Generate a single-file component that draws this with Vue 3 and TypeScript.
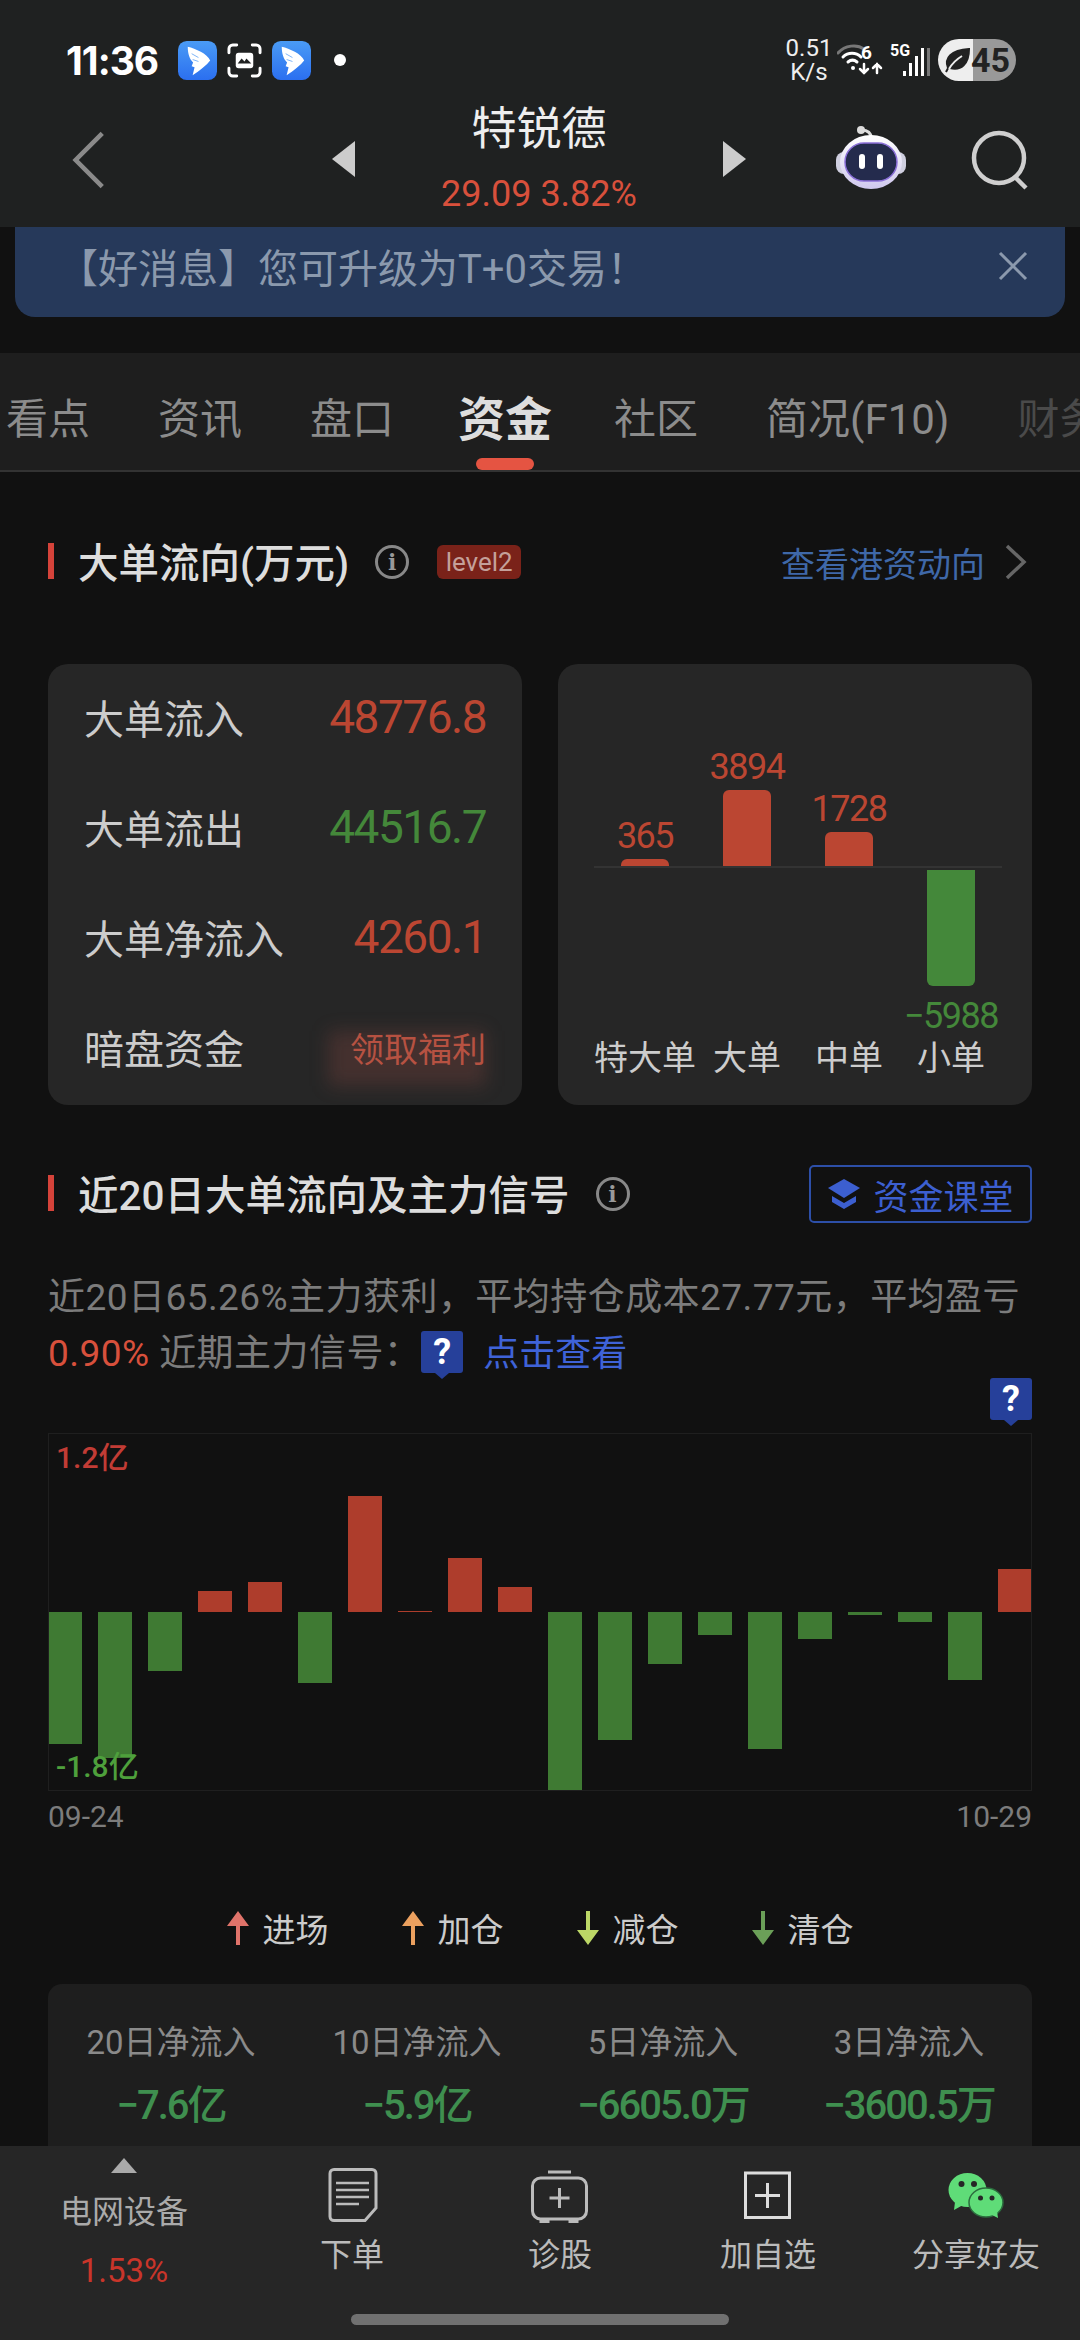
<script setup lang="ts">
interface Row { label: string; value: string; tone: string }
interface Col { value: string; label: string; height: number }

const tabs = ['看点', '资讯', '盘口', '资金', '社区', '简况(F10)', '财务']
const flowRows: Row[] = [
  { label: '大单流入', value: '48776.8', tone: 'red' },
  { label: '大单流出', value: '44516.7', tone: 'green' },
  { label: '大单净流入', value: '4260.1', tone: 'red' },
]
const orderCols: Col[] = [
  { value: '365', label: '特大单', height: 7 },
  { value: '3894', label: '大单', height: 76 },
  { value: '1728', label: '中单', height: 34 },
  { value: '−5988', label: '小单', height: -116 },
]
// 20-day net flow, in chart pixels: positive is inflow.
const dayFlow = [-132, -146, -59, 21, 30, -71, 116, 1, 54, 25, -179, -128, -52, -23, -137, -27, -3, -10, -68, 43]
const legend = [
  { label: '进场', color: '#e0736a', up: true },
  { label: '加仓', color: '#eba05f', up: true },
  { label: '减仓', color: '#bcd766', up: false },
  { label: '清仓', color: '#6b9f58', up: false },
]
const netFlows = [
  { label: '20日净流入', value: '−7.6亿' },
  { label: '10日净流入', value: '−5.9亿' },
  { label: '5日净流入', value: '−6605.0万' },
  { label: '3日净流入', value: '−3600.5万' },
]
</script>

<template>
  <div class="page">
    <header class="top">
      <div class="status">
        <div class="status-left">
          <span class="clock">11:36</span>
          <svg class="app-icon" viewBox="0 0 40 40">
            <defs>
              <linearGradient id="ding" x1="0" y1="0" x2="0" y2="1">
                <stop offset="0" stop-color="#4a9bf5" />
                <stop offset="1" stop-color="#2b6ff0" />
              </linearGradient>
            </defs>
            <rect width="40" height="40" rx="9" fill="url(#ding)" />
            <path d="M10 6C18 8 30 13 33 20 30 24 22 31 15 35L17 27 14 26 15.500 22C12 19 10 13 10 6Z" fill="#fff" />
            <path d="M14 13l7 4M15 19l6 2" stroke="#7db4f7" stroke-width="1" fill="none" />
          </svg>
          <svg class="shot-icon" viewBox="0 0 36 36" fill="none" stroke="#fff" stroke-width="3" stroke-linecap="round">
            <path d="M2 10V6a4 4 0 0 1 4-4h4M26 2h4a4 4 0 0 1 4 4v4M34 26v4a4 4 0 0 1-4 4h-4M10 34H6a4 4 0 0 1-4-4v-4" />
            <rect x="9" y="10" width="18" height="16" rx="3" fill="#fff" stroke="none" />
            <path d="M11 21l4-5 3 3 2-3 5 5z" fill="#1f2121" stroke="none" />
          </svg>
          <svg class="app-icon" viewBox="0 0 40 40">
            <rect width="40" height="40" rx="9" fill="url(#ding)" />
            <path d="M10 6C18 8 30 13 33 20 30 24 22 31 15 35L17 27 14 26 15.500 22C12 19 10 13 10 6Z" fill="#fff" />
            <path d="M14 13l7 4M15 19l6 2" stroke="#7db4f7" stroke-width="1" fill="none" />
          </svg>
          <i class="note-dot"></i>
        </div>
        <div class="status-right">
          <div class="speed"><span>0.51</span><span>K/s</span></div>
          <svg class="wifi" viewBox="0 0 46 36" fill="none" stroke-linecap="round">
            <path d="M1 11C8 3 20 2 27 7" stroke="#777" stroke-width="3" />
            <path d="M6 15c5-5 13-5 18 0" stroke="#fff" stroke-width="3" />
            <path d="M11 20c3-2.500 6-2.500 9 0" stroke="#fff" stroke-width="3" />
            <circle cx="16" cy="26" r="2" fill="#fff" />
            <path d="M27 22v9M23 27l4 4 4-4M40 31v-9M36 26l4-4 4 4" stroke="#fff" stroke-width="2.500" />
          </svg>
          <span class="wifi-six">6</span>
          <div class="cell">
            <span class="cell-type">5G</span>
            <div class="bars"><i></i><i></i><i></i><i></i><i></i></div>
          </div>
          <div class="battery">
            <svg class="leaf" viewBox="0 0 28 28"><path d="M3 26C6 20 8 17 12 14M5 22C1 12 8 4 26 3 26 18 18 25 7 22Z" fill="#222" stroke="#222" stroke-width="2" /><path d="M6 23C10 16 14 13 19 10" stroke="#eee" stroke-width="2" fill="none" /></svg>
            <span>45</span>
          </div>
        </div>
      </div>
      <div class="nav">
        <svg class="back" viewBox="0 0 36 62" fill="none" stroke="#8a8a8a" stroke-width="5"><path d="M33 2 4 31l29 29" /></svg>
        <div class="stock">
          <i class="tri tri-left"></i>
          <div class="stock-name">
            <strong>特锐德</strong>
            <span>29.09 3.82%</span>
          </div>
          <i class="tri tri-right"></i>
        </div>
        <svg class="robot" viewBox="0 0 70 64">
          <defs>
            <linearGradient id="face" x1="0" y1="0" x2="0" y2="1">
              <stop offset="0" stop-color="#ffffff" />
              <stop offset="1" stop-color="#cfc8ee" />
            </linearGradient>
          </defs>
          <path d="M26 4c5 0 9 3 10 9" fill="none" stroke="#dcdcdc" stroke-width="3" />
          <circle cx="25" cy="4" r="4" fill="#dcdcdc" />
          <rect x="0" y="26" width="70" height="22" rx="8" fill="#cfcfe0" />
          <ellipse cx="35" cy="36" rx="31" ry="27" fill="url(#face)" />
          <rect x="9" y="17" width="52" height="38" rx="19" fill="#242b4d" stroke="#8a6fd8" stroke-width="1.500" />
          <rect x="23" y="28" width="6" height="15" rx="3" fill="#fff" />
          <rect x="41" y="28" width="6" height="15" rx="3" fill="#fff" />
        </svg>
        <svg class="search" viewBox="0 0 60 60" fill="none" stroke="#cfcfcf" stroke-width="4.500"><circle cx="28" cy="28" r="25" /><path d="M44 47l11 11" /></svg>
      </div>
    </header>

    <div class="notice">
      <span class="notice-text">【好消息】您可升级为T+0交易！</span>
      <svg class="close" viewBox="0 0 30 30" fill="none" stroke="#8b99ad" stroke-width="3"><path d="M2 2l26 26M28 2 2 28" /></svg>
    </div>

    <nav class="tabs">
      <span v-for="t in tabs" :key="t" class="tab" :class="{ active: t === '资金', faded: t === '财务' }">{{ t }}</span>
    </nav>

    <main>
      <section class="head head-flow">
        <h2 class="title">大单流向(万元)</h2>
        <span class="info">i</span>
        <span class="level">level2</span>
        <a class="link">查看港资动向</a>
        <svg class="link-chevron" viewBox="0 0 22 36" fill="none" stroke="#666" stroke-width="3.500"><path d="M2 2l17 16L2 34" /></svg>
      </section>

      <section class="cards">
        <div class="card flow-card">
          <div v-for="r in flowRows" :key="r.label" class="flow-row">
            <span>{{ r.label }}</span>
            <b :class="r.tone">{{ r.value }}</b>
          </div>
          <div class="flow-row">
            <span>暗盘资金</span>
            <em class="perk">领取福利</em>
          </div>
        </div>
        <div class="card order-card">
          <div v-for="c in orderCols" :key="c.label" class="order-col">
            <div class="order-up">
              <template v-if="c.height > 0">
                <span class="order-value red">{{ c.value }}</span>
                <i class="order-bar bar-red" :style="{ height: c.height + 'px' }"></i>
              </template>
            </div>
            <div class="order-down">
              <template v-if="c.height < 0">
                <i class="order-bar bar-green" :style="{ height: -c.height + 'px' }"></i>
                <span class="order-value green">{{ c.value }}</span>
              </template>
            </div>
            <span class="order-label">{{ c.label }}</span>
          </div>
        </div>
      </section>

      <section class="head head-signal">
        <h2 class="title">近20日大单流向及主力信号</h2>
        <span class="info">i</span>
        <button class="lesson">
          <svg viewBox="0 0 34 32" fill="#3c5fd0"><path d="M17 1l16 9-16 10L1 10z" /><path d="M5 18l12 7 12-7v6l-12 7-12-7z" /></svg>
          资金课堂
        </button>
      </section>

      <p class="summary">
        近20日65.26%主力获利，平均持仓成本27.77元，平均盈亏<br />
        <span class="loss">0.90%</span> 近期主力信号：<i class="q q-inline">?</i><a class="check">点击查看</a>
      </p>
      <div class="q-row"><i class="q">?</i></div>

      <div class="day-chart">
        <div v-for="(v, i) in dayFlow" :key="i" class="day-col">
          <div class="day-up"><i v-if="v > 0" class="bar-red" :style="{ height: v + 'px' }"></i></div>
          <div class="day-down"><i v-if="v < 0" class="bar-green" :style="{ height: -v + 'px' }"></i></div>
        </div>
        <span class="scale scale-top">1.2亿</span>
        <span class="scale scale-bottom">-1.8亿</span>
      </div>
      <div class="dates"><span>09-24</span><span>10-29</span></div>

      <div class="legend">
        <div v-for="l in legend" :key="l.label" class="legend-item">
          <svg viewBox="0 0 22 34" :class="{ down: !l.up }">
            <path d="M11 0 22 15H13V34H9V15H0z" :fill="l.color" />
          </svg>
          <span>{{ l.label }}</span>
        </div>
      </div>

      <div class="net-card">
        <div v-for="n in netFlows" :key="n.label" class="net-item">
          <span>{{ n.label }}</span>
          <b>{{ n.value }}</b>
        </div>
      </div>
    </main>

    <footer class="dock">
      <div class="dock-row">
        <div class="sector">
          <i class="sector-tri"></i>
          <span>电网设备</span>
          <b>1.53%</b>
        </div>
        <div class="dock-item">
          <svg viewBox="0 0 60 60" fill="none" stroke="#bbb" stroke-width="3">
            <path d="M12 3.500H50a4 4 0 0 1 4 4V42L43 54.500H12a4 4 0 0 1-4-4V7.500a4 4 0 0 1 4-4z" />
            <path d="M14 17H47M14 24H47M14 31H47M14 38H37" stroke-width="2.600" />
          </svg>
          <span>下单</span>
        </div>
        <div class="dock-item">
          <svg viewBox="0 0 60 60" fill="none" stroke="#bbb" stroke-width="3">
            <path d="M18 6H41" />
            <rect x="2.500" y="12" width="54" height="41" rx="8" />
            <path d="M29.500 22V42M19.500 32H39.500" />
            <path d="M9.500 53h10v4h-10zM38.500 53h10v4h-10z" fill="#bbb" stroke="none" />
          </svg>
          <span>诊股</span>
        </div>
        <div class="dock-item">
          <svg viewBox="0 0 60 60" fill="none" stroke="#ddd" stroke-width="3">
            <rect x="7.500" y="7" width="44" height="44.500" />
            <path d="M29.500 17V42M17 29.500H42" />
          </svg>
          <span>加自选</span>
        </div>
        <div class="dock-item">
          <svg viewBox="0 0 60 60" fill="#5fdc78">
            <ellipse cx="21.500" cy="24" rx="19" ry="17" />
            <path d="M9 36 8 44 17 39z" />
            <ellipse cx="40" cy="36.500" rx="17" ry="14.500" stroke="#2b6b3d" stroke-width="1.500" />
            <path d="M46 49 52 52 51 45z" />
            <circle cx="15.500" cy="18" r="3" fill="#262626" />
            <circle cx="28" cy="18" r="3" fill="#262626" />
            <circle cx="34.500" cy="32" r="2.500" fill="#262626" />
            <circle cx="46" cy="32" r="2.500" fill="#262626" />
          </svg>
          <span>分享好友</span>
        </div>
      </div>
      <div class="home-pill"></div>
    </footer>
  </div>
</template>

<style scoped>
.page {
  position: relative;
  width: 1080px;
  height: 2340px;
  overflow: hidden;
  background: #111;
  color: #ccc;
  font-family: Roboto, "Noto Sans CJK SC", sans-serif;
}
i, em { font-style: normal; }
h2, p { margin: 0; font-weight: 500; }

.top { height: 227px; background: #1f2121; position: relative; z-index: 2; }
.status { height: 100px; display: flex; justify-content: space-between; padding: 39px 64px 0 66px; box-sizing: border-box; }
.status-left { display: flex; align-items: center; height: 42px; }
.clock { font: 700 39px Inter, sans-serif; color: #fff; letter-spacing: -1px; width: 112px; }
.app-icon { width: 39px; height: 39px; }
.shot-icon { width: 35px; height: 35px; margin: 0 10px; }
.note-dot { width: 12px; height: 12px; border-radius: 50%; background: #fff; margin-left: 23px; }
.status-right { display: flex; align-items: center; height: 42px; position: relative; }
.speed { display: flex; flex-direction: column; align-items: center; width: 38px; font: 400 24px/24px Roboto, sans-serif; color: #eee; }
.wifi { width: 46px; height: 36px; margin-left: 9px; }
.wifi-six { position: absolute; left: 71px; top: 2px; font: 700 19px Roboto, sans-serif; color: #fff; }
.cell { width: 40px; height: 32px; margin-left: 7px; position: relative; }
.cell-type { position: absolute; left: 0; top: -3px; font: 700 16px Roboto, sans-serif; color: #fff; }
.bars { position: absolute; right: 0; bottom: 0; display: flex; align-items: flex-end; gap: 3px; }
.bars i { width: 3px; background: #fff; }
.bars i:nth-child(1) { height: 5px; }
.bars i:nth-child(2) { height: 13px; }
.bars i:nth-child(3) { height: 20px; }
.bars i:nth-child(4) { height: 28px; }
.bars i:nth-child(5) { height: 28px; background: #777; }
.battery { width: 78px; height: 42px; margin-left: 8px; border-radius: 21px; background: linear-gradient(90deg, #eee 45%, #999 45%); display: flex; align-items: center; padding-left: 5px; box-sizing: border-box; color: #222; font: 700 34px Roboto, sans-serif; }
.leaf { width: 28px; height: 28px; }

.nav { display: flex; align-items: flex-start; height: 127px; position: relative; }
.back { width: 33px; height: 60px; margin: 30px 0 0 72px; }
.stock { display: flex; width: 414px; margin-left: 227px; align-items: flex-start; justify-content: space-between; }
.tri { width: 0; height: 0; border-style: solid; margin-top: 41px; }
.tri-left { border-width: 18px 23px 18px 0; border-color: transparent #ccc transparent transparent; }
.tri-right { border-width: 18px 0 18px 23px; border-color: transparent transparent transparent #ccc; }
.stock-name { display: flex; flex-direction: column; align-items: center; }
.stock-name strong { font-weight: 400; font-size: 45px; line-height: 56px; margin-top: 2px; color: #eee; }
.stock-name span { font-size: 36px; line-height: 40px; margin-top: 16px; color: #d8503c; }
.robot { width: 70px; height: 64px; margin: 26px 0 0 90px; }
.search { width: 60px; height: 60px; margin: 30px 0 0 65px; }

.notice { margin: 0 15px; height: 90px; background: #26395a; border-radius: 0 0 20px 20px; display: flex; align-items: center; justify-content: space-between; padding: 0 37px 12px 54px; box-sizing: border-box; color: #8b99ad; font-size: 40px; }
.notice-text { margin-left: -11px; }
.close { width: 30px; height: 30px; }

.tabs { margin-top: 36px; height: 119px; background: #1e1e1e; border-bottom: 2px solid #333; box-sizing: border-box; display: flex; align-items: stretch; gap: 68px; padding-left: 6px; overflow: hidden; white-space: nowrap; font-size: 42px; color: #8c8c8c; }
.tab { position: relative; flex: none; display: flex; align-items: center; padding-top: 8px; }
.tab.active { font-size: 47px; font-weight: 700; color: #ddd; margin: 0 -6px 0 -4px; }
.tab.active::after { content: ""; position: absolute; left: 18px; right: 18px; bottom: 0; height: 12px; border-radius: 6px; background: #e55442; }
.tab.faded { color: #4a4a4a; }

.head { display: flex; align-items: center; padding: 0 48px; position: relative; }
.head-flow { margin-top: 72px; height: 36px; }
.head-signal { margin-top: 71px; height: 36px; }
.title { font-size: 40.500px; line-height: 46px; color: #ddd; padding-left: 30px; margin-top: 3px; position: relative; white-space: nowrap; }
.title::before { content: ""; position: absolute; left: 0; top: 2px; width: 6px; height: 36px; background: #d5433a; }
.info { width: 34px; height: 34px; border: 3px solid #888; border-radius: 50%; box-sizing: border-box; display: flex; align-items: center; justify-content: center; color: #999; font: 700 22px "DejaVu Serif", serif; margin-left: 26px; }
.level { width: 84px; height: 34px; margin-left: 28px; background: #7a2219; border-radius: 6px; color: #c4a09a; font-size: 26px; line-height: 34px; text-align: center; }
.link { margin-left: auto; font-size: 34px; color: #3f68a8; }
.link-chevron { width: 22px; height: 36px; margin-left: 20px; margin-right: 5px; }

.cards { display: flex; justify-content: space-between; padding: 0 48px; margin-top: 84px; }
.card { width: 474px; height: 441px; background: #262626; border-radius: 20px; }
.flow-card { padding: 0 36px; box-sizing: border-box; display: flex; flex-direction: column; gap: 4px; }
.flow-row { display: flex; justify-content: space-between; align-items: center; height: 106px; flex: none; font-size: 40px; color: #ccc; }
.flow-row b { font-size: 46px; font-weight: 400; letter-spacing: -1.500px; }
.red { color: #bb4632; }
.green { color: #44883a; }
.perk { position: relative; font-size: 34px; color: #b5503f; }
.perk::before { content: ""; position: absolute; left: -22px; right: 0; top: 8px; bottom: -14px; background: rgba(190, 90, 80, 0.2); filter: blur(9px); }

.order-card { display: flex; padding: 0 30px 0 36px; box-sizing: border-box; }
.order-col { width: 102px; display: flex; flex-direction: column; align-items: center; position: relative; }
.order-up { width: 100%; height: 204px; border-bottom: 2px solid #333; box-sizing: border-box; display: flex; flex-direction: column; align-items: center; justify-content: flex-end; }
.order-down { width: 100%; height: 175px; display: flex; flex-direction: column; align-items: center; padding-top: 2px; box-sizing: border-box; }
.order-value { font-size: 36px; line-height: 40px; margin-bottom: 3px; letter-spacing: -1.500px; }
.order-down .order-value { margin: 10px 0 0; white-space: nowrap; }
.order-bar { width: 48px; display: block; }
.bar-red { background: #bb4632; border-radius: 6px 6px 0 0; }
.bar-green { background: #44883a; border-radius: 0 0 6px 6px; }
.order-label { font-size: 34px; line-height: 44px; white-space: nowrap; margin-top: -7px; color: #ccc; }

.lesson { margin-left: auto; width: 223px; height: 58px; border: 2px solid #2d4fa8; border-radius: 5px; background: none; color: #3c5fd0; font: 400 35px Roboto, "Noto Sans CJK SC", sans-serif; display: flex; align-items: center; justify-content: center; gap: 12px; padding: 0; white-space: nowrap; }
.lesson svg { width: 34px; height: 32px; }

.summary { margin-top: 58px; padding: 0 48px; font-size: 37px; letter-spacing: 0.450px; font-weight: 400; line-height: 56px; color: #7c7c7c; white-space: nowrap; }
.loss { color: #d8503c; }
.check { color: #3f63d8; margin-left: 20px; letter-spacing: 0; font-size: 36px; }
.q { display: inline-block; position: relative; width: 42px; height: 42px; background: #26409a; border-radius: 3px; color: #fff; font: 700 36px/42px Roboto, sans-serif; text-align: center; letter-spacing: 0; }
.q::after { content: ""; position: absolute; left: 14px; top: 42px; border-style: solid; border-width: 6px 7px 0; border-color: #26409a transparent transparent; }
.q-inline { vertical-align: 2px; }
.q-row { display: flex; justify-content: flex-end; padding-right: 48px; margin-top: -4px; height: 55px; }

.day-chart { position: relative; height: 358px; margin: 0 48px; display: flex; justify-content: space-between; outline: 1px solid #1f1f1f; outline-offset: -1px; }
.day-col { width: 33.500px; display: flex; flex-direction: column; }
.day-up { height: 179px; display: flex; flex-direction: column; justify-content: flex-end; }
.day-down { height: 179px; }
.day-col i { display: block; border-radius: 0; }
.day-col .bar-red { background: #ae3d2c; }
.day-col .bar-green { background: #3f7a33; }
.scale { position: absolute; left: 8px; font-size: 30px; font-weight: 500; }
.scale-top { top: 0; color: #c23c35; }
.scale-bottom { top: 309px; color: #4ea03c; }

.dates { display: flex; justify-content: space-between; padding: 0 48px; margin-top: 9px; font-size: 30px; color: #7c7c7c; line-height: 34px; }

.legend { display: flex; justify-content: center; gap: 43px; margin-top: 74px; padding-left: 30px; }
.legend-item { display: flex; align-items: center; gap: 14px; font-size: 33px; color: #ccc; width: 132px; height: 40px; }
.legend-item svg { width: 22px; height: 34px; }
.legend-item svg.down { transform: rotate(180deg); }

.net-card { margin: 36px 48px 0; height: 200px; background: #1e1e1e; border-radius: 14px; display: grid; grid-template-columns: repeat(4, 1fr); padding-top: 38px; box-sizing: border-box; }
.net-item { display: flex; flex-direction: column; align-items: center; gap: 20px; }
.net-item span { font-size: 33px; line-height: 42px; color: #8a8a8a; white-space: nowrap; }
.net-item b { font-size: 40px; font-weight: 500; letter-spacing: -2px; line-height: 44px; color: #3f8f4f; white-space: nowrap; }

.dock { position: absolute; left: 0; right: 0; bottom: 0; height: 194px; background: #262626; z-index: 3; }
.dock-row { display: flex; height: 168px; padding-top: 12px; box-sizing: border-box; position: relative; }
.sector { width: 248px; display: flex; flex-direction: column; align-items: center; font-size: 32px; color: #aaa; }
.sector-tri { width: 0; height: 0; border-style: solid; border-width: 0 13px 15px; border-color: transparent transparent #aaa; }
.sector span { margin-top: 16px; line-height: 46px; }
.sector b { font-weight: 400; font-size: 33px; line-height: 40px; margin-top: 16px; color: #c9352a; }
.dock-item { width: 208px; display: flex; flex-direction: column; align-items: center; font-size: 32px; color: #bbb; padding-top: 8px; }
.dock-item svg { height: 60px; width: 60px; flex: none; }
.dock-item span { margin-top: 6px; line-height: 46px; white-space: nowrap; }
.home-pill { position: absolute; left: 351px; bottom: 15px; width: 378px; height: 11px; border-radius: 6px; background: #707070; }
</style>
